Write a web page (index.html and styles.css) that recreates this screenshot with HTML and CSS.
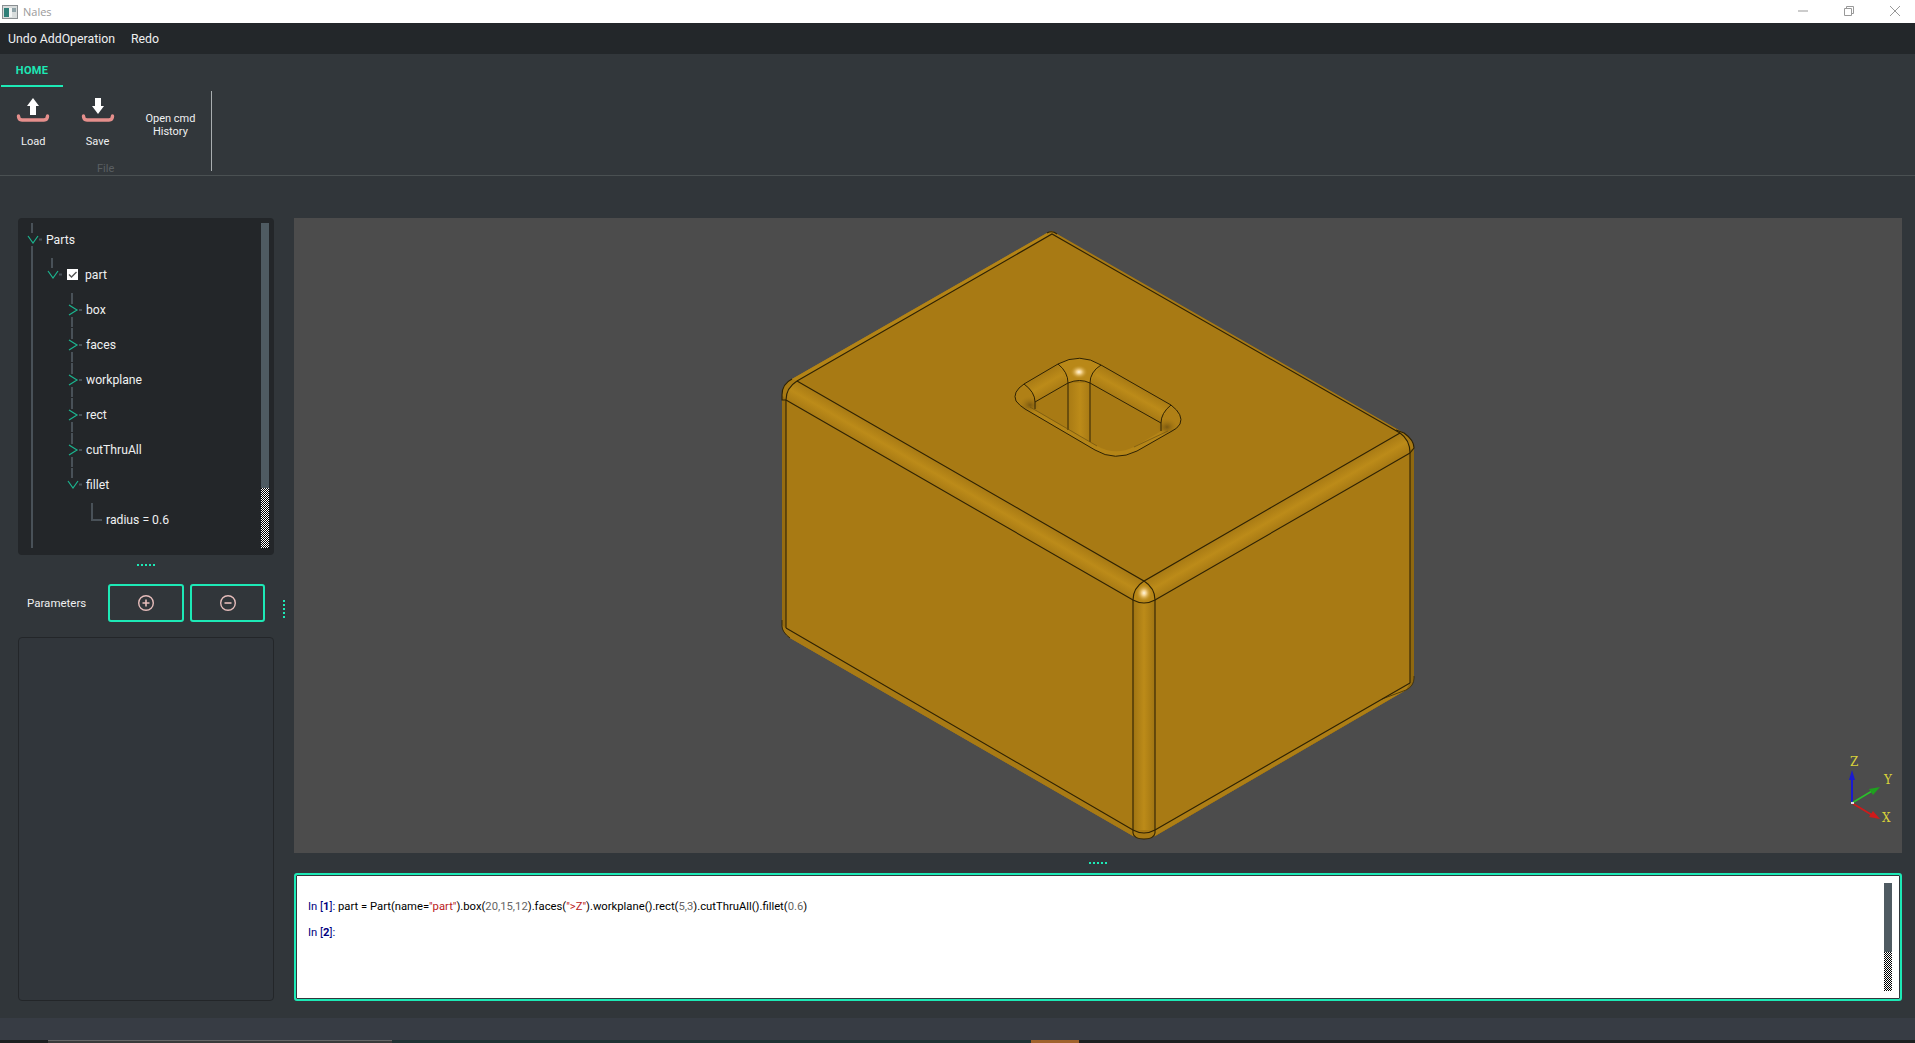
FILE: index.html
```html
<!DOCTYPE html>
<html lang="en">
<head>
    <meta charset="UTF-8">
    <title>Nales</title>
    <link rel="stylesheet" href="styles.css">
</head>
<body>
    <svg class="defs" width="0" height="0">
        <symbol id="guide" viewBox="0 0 20 35"><path d="M10 0V35" stroke="#495158" stroke-width="2"/></symbol>
        <symbol id="open-mid" viewBox="0 0 20 35">
            <path d="M10 1V11M10 24V35M17 17.5H21" stroke="#495158" stroke-width="2" fill="none"/>
            <path d="M6 14L11 21L16 14" stroke="#1bb58f" stroke-width="1.2" fill="none"/>
        </symbol>
        <symbol id="open-end" viewBox="0 0 20 35">
            <path d="M10 1V11M17 17.5H21" stroke="#495158" stroke-width="2" fill="none"/>
            <path d="M6 14L11 21L16 14" stroke="#1bb58f" stroke-width="1.2" fill="none"/>
        </symbol>
        <symbol id="closed" viewBox="0 0 20 35">
            <path d="M10 1V12M10 25V35M17 18H21" stroke="#495158" stroke-width="2" fill="none"/>
            <path d="M7 13L15 18L7 23" stroke="#1bb58f" stroke-width="1.2" fill="none"/>
        </symbol>
        <symbol id="corner" viewBox="0 0 20 35"><path d="M10 1V18H21" stroke="#495158" stroke-width="2" fill="none"/></symbol>
    </svg>

    <div class="titlebar">
        <svg class="app-icon" width="16" height="14" viewBox="0 0 16 14">
            <rect x="0.5" y="0.5" width="15" height="13" fill="#d8dcdc" stroke="#8a8f92"/>
            <rect x="2" y="3" width="5" height="9" fill="#2f7f78"/>
            <rect x="7" y="3" width="3" height="9" fill="#f2f4f4"/>
            <rect x="10" y="3" width="4" height="4" fill="#8fa3a8"/>
        </svg>
        <span class="title">Nales</span>
        <div class="win-buttons">
            <svg width="12" height="12" viewBox="0 0 12 12"><path d="M1 6H11" stroke="#999"/></svg>
            <svg width="12" height="12" viewBox="0 0 12 12"><path d="M1.5 3.5H8.5V10.5H1.5ZM3.5 3.5V1.5H10.5V8.5H8.5" stroke="#999" fill="none"/></svg>
            <svg width="12" height="12" viewBox="0 0 12 12"><path d="M1 1L11 11M11 1L1 11" stroke="#999"/></svg>
        </div>
    </div>

    <div class="menubar">
        <span>Undo AddOperation</span>
        <span>Redo</span>
    </div>

    <div class="ribbon">
        <div class="tabs"><div class="tab">HOME</div></div>
        <div class="group">
            <div class="group-items">
                <div class="tool">
                    <svg width="34" height="26" viewBox="0 0 34 26">
                        <path d="M17 1L23 9H20V18H14V9H11Z" fill="#fff"/>
                        <path d="M2.5 19C2.5 22 4 23 6 23H28C30 23 31.5 22 31.5 19" stroke="#e58f8c" stroke-width="3.4" stroke-linecap="round" fill="none"/>
                    </svg>
                    <span>Load</span>
                </div>
                <div class="tool">
                    <svg width="34" height="26" viewBox="0 0 34 26">
                        <path d="M14 1H20V9H23L17 17L11 9H14Z" fill="#fff"/>
                        <path d="M2.5 19C2.5 22 4 23 6 23H28C30 23 31.5 22 31.5 19" stroke="#e58f8c" stroke-width="3.4" stroke-linecap="round" fill="none"/>
                    </svg>
                    <span>Save</span>
                </div>
                <div class="tool-text">Open cmd<br>History</div>
            </div>
            <div class="group-name">File</div>
        </div>
    </div>

    <div class="main">
        <div class="left">
            <div class="tree">
                <div class="tree-rows">
                    <div class="row"><svg class="cell"><use href="#open-mid"/></svg><span class="label">Parts</span></div>
                    <div class="row"><svg class="cell"><use href="#guide"/></svg><svg class="cell"><use href="#open-end"/></svg>
                        <span class="check"><svg width="11" height="11" viewBox="0 0 11 11"><path d="M2 5.5L4.5 8L9.5 3" stroke="#555" stroke-width="1.4" fill="none"/></svg></span>
                        <span class="label label-check">part</span></div>
                    <div class="row"><svg class="cell"><use href="#guide"/></svg><i class="cell"></i><svg class="cell"><use href="#closed"/></svg><span class="label">box</span></div>
                    <div class="row"><svg class="cell"><use href="#guide"/></svg><i class="cell"></i><svg class="cell"><use href="#closed"/></svg><span class="label">faces</span></div>
                    <div class="row"><svg class="cell"><use href="#guide"/></svg><i class="cell"></i><svg class="cell"><use href="#closed"/></svg><span class="label">workplane</span></div>
                    <div class="row"><svg class="cell"><use href="#guide"/></svg><i class="cell"></i><svg class="cell"><use href="#closed"/></svg><span class="label">rect</span></div>
                    <div class="row"><svg class="cell"><use href="#guide"/></svg><i class="cell"></i><svg class="cell"><use href="#closed"/></svg><span class="label">cutThruAll</span></div>
                    <div class="row"><svg class="cell"><use href="#guide"/></svg><i class="cell"></i><svg class="cell"><use href="#open-end"/></svg><span class="label">fillet</span></div>
                    <div class="row"><svg class="cell"><use href="#guide"/></svg><i class="cell"></i><i class="cell"></i><svg class="cell"><use href="#corner"/></svg><span class="label">radius = 0.6</span></div>
                    <div class="row-tail"></div>
                </div>
                <div class="scroll scroll-tree"><div class="thumb thumb-tree"></div></div>
            </div>
            <div class="handle-h-area"><div class="dots-h"></div></div>
            <div class="params">
                <span class="params-label">Parameters</span>
                <button type="button" class="icon-btn">
                    <svg width="18" height="18" viewBox="0 0 18 18"><circle cx="9" cy="9" r="7.3" stroke="#e6bdbb" stroke-width="1.4" fill="none"/><path d="M9 5.5V12.5M5.5 9H12.5" stroke="#e6bdbb" stroke-width="1.6"/></svg>
                </button>
                <button type="button" class="icon-btn">
                    <svg width="18" height="18" viewBox="0 0 18 18"><circle cx="9" cy="9" r="7.3" stroke="#e6bdbb" stroke-width="1.4" fill="none"/><path d="M5.5 9H12.5" stroke="#e6bdbb" stroke-width="1.6"/></svg>
                </button>
            </div>
            <div class="param-panel"></div>
        </div>

        <div class="splitter"><div class="dots-v"></div></div>

        <div class="right">
            <div class="viewer">
                <svg class="scene" viewBox="294 218 1608 635" width="1608" height="635">
                    <defs>
                        <linearGradient id="band-l" gradientUnits="userSpaceOnUse" x1="970" y1="481" x2="959" y2="500">
                            <stop offset="0" stop-color="#a87a14"/><stop offset=".5" stop-color="#bc8b19"/><stop offset="1" stop-color="#a87a14"/>
                        </linearGradient>
                        <linearGradient id="band-r" gradientUnits="userSpaceOnUse" x1="1272" y1="507" x2="1283" y2="526">
                            <stop offset="0" stop-color="#a87a14"/><stop offset=".5" stop-color="#bc8b19"/><stop offset="1" stop-color="#a87a14"/>
                        </linearGradient>
                        <linearGradient id="band-v" gradientUnits="userSpaceOnUse" x1="1133" y1="0" x2="1155" y2="0">
                            <stop offset="0" stop-color="#a07412"/><stop offset=".5" stop-color="#bc8b19"/><stop offset="1" stop-color="#a07412"/>
                        </linearGradient>
                        <linearGradient id="col-v" gradientUnits="userSpaceOnUse" x1="1068" y1="0" x2="1090" y2="0">
                            <stop offset="0" stop-color="#a87a14"/><stop offset=".55" stop-color="#bc8b19"/><stop offset="1" stop-color="#a87a14"/>
                        </linearGradient>
                        <linearGradient id="hole-l" gradientUnits="userSpaceOnUse" x1="1041" y1="374" x2="1052" y2="393">
                            <stop offset="0" stop-color="#a87a14"/><stop offset=".5" stop-color="#bc8b19"/><stop offset="1" stop-color="#a87a14"/>
                        </linearGradient>
                        <linearGradient id="hole-r" gradientUnits="userSpaceOnUse" x1="1136" y1="385" x2="1126" y2="403">
                            <stop offset="0" stop-color="#a87a14"/><stop offset=".5" stop-color="#bc8b19"/><stop offset="1" stop-color="#a87a14"/>
                        </linearGradient>
                        <radialGradient id="shine" gradientUnits="objectBoundingBox">
                            <stop offset="0" stop-color="#fff6e0"/><stop offset=".3" stop-color="#f2cf86"/><stop offset="1" stop-color="#bc8b19" stop-opacity="0"/>
                        </radialGradient>
                        <radialGradient id="shade" gradientUnits="objectBoundingBox">
                            <stop offset="0" stop-color="#7a5810"/><stop offset="1" stop-color="#a87a14" stop-opacity="0"/>
                        </radialGradient>
                    </defs>

                    <!-- body -->
                    <path d="M1052 231L1404 433Q1414 440 1414 448V677Q1414 686 1406 690L1155 836Q1144 842 1133 836L790 638Q782 632 782 625V395Q782 384 792 379L1047 233Q1050 231 1052 231Z" fill="#a87a14"/>

                    <!-- rims along the silhouette -->
                    <path d="M786 400V628L1133 830V836L790 638Q782 632 782 625V395Z" fill="#a87a14"/>
                    <path d="M782 395L786 400V628L782 625Z" fill="#966c11"/>
                    <path d="M1155 830L1410 683V450L1414 448V677Q1414 686 1406 690L1155 836Z" fill="#8f6810"/>
                    <path d="M1155 830L1410 683L1406 690L1155 836Z" fill="#ad7e15"/>
                    <path d="M797 381L1052 234L1047 233L792 379Z" fill="#b48416"/>

                    <!-- fillets -->
                    <path d="M797 381L1144 581L1133 600L786 400Q786 388 797 381Z" fill="url(#band-l)"/>
                    <path d="M1144 581L1400 433Q1410 440 1410 453L1155 600Z" fill="url(#band-r)"/>
                    <path d="M1133 600H1155V830H1133Z" fill="url(#band-v)"/>
                    <path d="M1144 581Q1133 588 1133 600Q1144 606 1155 600Q1155 588 1144 581Z" fill="#b88717"/>
                    <ellipse cx="1144" cy="593" rx="8" ry="9" fill="url(#shine)"/>
                    <path d="M1133 830Q1144 836 1155 830V833Q1154 839 1144 839Q1134 839 1133 833Z" fill="#a87a14"/>

                    <!-- edges -->
                    <g fill="none" stroke="#2e2204" stroke-width="1.1">
                        <path d="M797 381L1052 234L1400 433"/>
                        <path d="M797 381L1144 581L1400 433"/>
                        <path d="M786 400L1133 600Q1144 606 1155 600L1410 453"/>
                        <path d="M1144 581Q1133 588 1133 600V830M1144 581Q1155 588 1155 600V830"/>
                        <path d="M786 628L1133 830Q1144 836 1155 830L1410 683"/>
                        <path d="M1133 830V833Q1134 839 1144 839Q1154 839 1155 833V830"/>
                        <path d="M797 381Q786 388 786 400V628"/>
                        <path d="M792 379Q782 384 782 395V400L786 400"/>
                        <path d="M1400 433Q1410 440 1410 453V683"/>
                        <path d="M1396 430L1404 433Q1414 440 1414 448L1410 453"/>
                        <path d="M1414 676V678Q1414 686 1406 690L1382 699" stroke-width="0.7"/>
                        <path d="M782 620V626Q782 632 790 638" stroke-width="0.9"/>
                        <path d="M1047 233Q1052 230 1057 234"/>
                    </g>

                    <!-- hole -->
                    <path d="M1024 384L1058 364Q1080 352 1101 365L1171 405Q1184 415 1180 424Q1177 429 1172 431L1137 451Q1115 462 1095 450L1025 409Q1020 406 1016 401Q1012 392 1024 384Z" fill="#a87a14"/>
                    <path d="M1068 383H1090V442L1068 430Z" fill="url(#col-v)"/>
                    <path d="M1025 409L1095 450Q1115 462 1137 451L1172 431L1163 430L1134 447Q1115 456 1097 446L1035 410L1030 406Z" fill="#b58517"/>
                    <path d="M1024 384L1058 364L1068 383L1035 402Q1035 392 1024 384Z" fill="url(#hole-l)"/>
                    <path d="M1101 365L1171 405Q1161 413 1161 423L1090 383Z" fill="url(#hole-r)"/>
                    <path d="M1058 364Q1080 352 1101 365L1090 383Q1080 378 1068 383Z" fill="#b98818"/>
                    <path d="M1024 384Q1035 392 1035 402L1030 408Q1020 406 1016 401Q1012 392 1024 384Z" fill="#b08016"/>
                    <path d="M1171 405Q1161 413 1161 423L1167 431Q1177 429 1180 424Q1184 415 1171 405Z" fill="#b08016"/>
                    <ellipse cx="1030" cy="405" rx="11" ry="9" fill="url(#shade)"/>
                    <ellipse cx="1167" cy="427" rx="11" ry="9" fill="url(#shade)"/>
                    <ellipse cx="1079" cy="372" rx="9" ry="7" fill="url(#shine)"/>
                    <g fill="none" stroke="#2e2204" stroke-width="1">
                        <path d="M1024 384L1058 364Q1080 352 1101 365L1171 405Q1184 415 1180 424Q1177 429 1172 431L1137 451Q1115 462 1095 450L1025 409Q1020 406 1016 401Q1012 392 1024 384Z"/>
                        <path d="M1035 402L1068 383Q1080 378 1090 383L1161 423"/>
                        <path d="M1024 384Q1035 392 1035 402V409"/>
                        <path d="M1058 364Q1068 372 1068 383V430"/>
                        <path d="M1101 365Q1090 372 1090 383V442"/>
                        <path d="M1171 405Q1161 413 1161 423V431"/>
                        <path d="M1030 407L1097 446M1134 447L1168 431" stroke="#6e5110" stroke-width="0.7"/>
                    </g>

                    <!-- axis triad -->
                    <path d="M1852 803V778" stroke="#1a1ad0" stroke-width="2"/>
                    <path d="M1852 770L1855 780H1849Z" fill="#1a1ad0"/>
                    <path d="M1852 803L1872 791" stroke="#2bc02b" stroke-width="1.5"/>
                    <path d="M1880 787L1873 795L1869 789Z" fill="#1fa01f"/>
                    <path d="M1852 803L1872 815" stroke="#d01a1a" stroke-width="1.5"/>
                    <path d="M1880 819L1869 817L1873 811Z" fill="#d01a1a"/>
                    <rect x="1851" y="802" width="3" height="2" fill="#ddd"/>
                    <text class="axis" x="1850" y="766">Z</text>
                    <text class="axis" x="1884" y="784">Y</text>
                    <text class="axis" x="1882" y="822">X</text>
                </svg>
            </div>
            <div class="handle-h-area handle-console"><div class="dots-h"></div></div>
            <div class="console">
                <div class="console-text">
                    <p><span class="prompt">In [<b>1</b>]:</span> part = Part(name=<span class="str">"part"</span>).box(<span class="num">20,15,12</span>).faces(<span class="str">"&gt;Z"</span>).workplane().rect(<span class="num">5,3</span>).cutThruAll().fillet(<span class="num">0.6</span>)</p>
                    <p><span class="prompt">In [<b>2</b>]:</span></p>
                </div>
                <div class="scroll scroll-console"><div class="thumb thumb-console"></div></div>
            </div>
        </div>
    </div>

    <div class="statusbar"></div>
    <div class="taskbar">
        <i class="task-a"></i><i class="task-b"></i><i class="task-c"></i><i class="task-d"></i><i class="task-e"></i>
    </div>
</body>
</html>
```

FILE: styles.css
```css
html, body {
    margin: 0;
    height: 100%;
    overflow: hidden;
}
body {
    display: flex;
    flex-direction: column;
    width: 1915px;
    height: 1043px;
    background-color: #31363a;
    color: #eff0f1;
    font-family: Roboto, 'Liberation Sans', sans-serif;
    font-size: 12px;
}
.defs {
    position: absolute;
}

.titlebar {
    display: flex;
    align-items: center;
    height: 23px;
    background-color: #fff;
    padding-left: 2px;
}
.app-icon {
    margin-right: 5px;
}
.title {
    font-family: 'Open Sans', sans-serif;
    font-size: 11px;
    color: #9a9a9a;
}
.win-buttons {
    display: flex;
    margin-left: auto;
    gap: 34px;
    padding-right: 14px;
    padding-bottom: 2px;
}

.menubar {
    display: flex;
    align-items: center;
    gap: 16px;
    height: 31px;
    padding-left: 8px;
    background-color: #23272a;
    font-size: 12.3px;
}

.ribbon {
    height: 121px;
    background-color: #32373b;
    border-bottom: 1px solid #4a5052;
    display: flex;
    flex-direction: column;
}
.tabs {
    padding-left: 1px;
    height: 33px;
}
.tab {
    width: 62px;
    height: 31px;
    line-height: 33px;
    text-align: center;
    border-bottom: 2px solid #1de9b6;
    color: #1de9b6;
    font-size: 11px;
    font-weight: 700;
    letter-spacing: .3px;
}
.group {
    width: 211px;
    height: 80px;
    margin-top: 4px;
    border-right: 1px solid #a9aeb0;
    position: relative;
}
.group-items {
    display: flex;
    padding-left: 1px;
}
.tool {
    display: flex;
    flex-direction: column;
    align-items: center;
    width: 65px;
    font-size: 11px;
    padding-top: 6px;
}
.tool span {
    margin-top: 12px;
}
.tool-text {
    width: 82px;
    margin-top: 21px;
    font-size: 11px;
    line-height: 13px;
    text-align: center;
}
.group-name {
    position: absolute;
    left: 97px;
    bottom: -4px;
    font-size: 11px;
    color: #5a5f62;
}

.main {
    flex: 1;
    display: flex;
    padding: 42px 13px 17px 18px;
    min-height: 0;
}
.left {
    width: 256px;
    display: flex;
    flex-direction: column;
}
.tree {
    height: 337px;
    box-sizing: border-box;
    display: flex;
    background-color: #232629;
    border-radius: 4px;
    padding: 4px 5px 7px 4px;
    font-size: 12.2px;
}
.tree-rows {
    flex: 1;
}
.row {
    display: flex;
    align-items: center;
    height: 35px;
}
.row-tail {
    height: 11px;
    width: 20px;
}
.row-tail::before {
    content: "";
    display: block;
    width: 2px;
    height: 11px;
    margin-left: 9px;
    background-color: #495158;
}
.cell {
    display: block;
    flex: none;
    width: 20px;
    height: 35px;
}
.label {
    margin-left: 4px;
}
.label-check {
    margin-left: 7px;
}
.check {
    display: flex;
    width: 11px;
    height: 11px;
    margin-left: 5px;
    background-color: #fff;
}

.scroll {
    flex: none;
    width: 8px;
    display: flex;
    background-image: repeating-conic-gradient(#000 0 25%, #fff 0 50%);
    background-size: 2px 2px;
}
.thumb {
    width: 100%;
    background-color: #4f5b62;
}
.scroll-tree {
    margin-top: 1px;
}
.thumb-tree {
    height: 265px;
}

.handle-h-area {
    height: 29px;
    flex: none;
    display: flex;
    justify-content: center;
    padding-top: 9px;
    box-sizing: border-box;
}
.dots-h {
    width: 18px;
    height: 2px;
    background-image: repeating-linear-gradient(90deg, #1de9b6 0 2px, transparent 2px 4px);
}
.params {
    display: flex;
    align-items: center;
    height: 38px;
    flex: none;
}
.params-label {
    width: 90px;
    padding-left: 9px;
    box-sizing: border-box;
    font-size: 11.5px;
}
.icon-btn {
    display: flex;
    align-items: center;
    justify-content: center;
    width: 76px;
    height: 38px;
    margin-right: 6px;
    padding: 0;
    background-color: transparent;
    border: 2px solid #1de9b6;
    border-radius: 3px;
}
.icon-btn + .icon-btn {
    width: 75px;
}
.param-panel {
    flex: 1;
    margin-top: 15px;
    background-color: #31363b;
    border: 1px solid #232629;
    border-radius: 4px;
}

.splitter {
    width: 20px;
    flex: none;
    display: flex;
    justify-content: center;
}
.dots-v {
    width: 2px;
    height: 18px;
    margin-top: 382px;
    background-image: repeating-linear-gradient(0deg, #1de9b6 0 2px, transparent 2px 4px);
}

.right {
    flex: 1;
    display: flex;
    flex-direction: column;
    min-width: 0;
}
.viewer {
    height: 635px;
    flex: none;
    background-color: #4c4c4c;
}
.scene {
    display: block;
}
.axis {
    font-family: 'DejaVu Serif', serif;
    font-size: 12px;
    fill: #d8d23a;
}
.handle-console {
    height: 20px;
    padding-top: 9px;
}
.console {
    flex: 1;
    display: flex;
    background-color: #fff;
    border: 2px solid #1de9b6;
    border-radius: 3px;
    box-shadow: inset 0 0 0 1px #31363b;
    padding: 8px 8px 8px 12px;
    color: #000;
    font-size: 11.25px;
}
.console-text {
    flex: 1;
    padding-top: 17px;
}
.console-text p {
    margin: 0 0 13px;
    height: 13px;
    line-height: 13px;
}
.prompt {
    color: #000080;
}
.str {
    color: #ba2121;
}
.num {
    color: #666;
}
.thumb-console {
    height: 69px;
}

.statusbar {
    height: 22px;
    flex: none;
    background-color: #373c44;
}
.taskbar {
    height: 3px;
    flex: none;
    display: flex;
    background-color: #1c1f20;
}
.task-a { width: 48px; }
.task-b { width: 344px; background-color: #3a3a3a; border-top: 1px solid #666; box-sizing: border-box; }
.task-c { width: 639px; background-color: #1f3233; }
.task-d { width: 48px; background-color: #a0622c; }
.task-e { flex: 1; }
```
